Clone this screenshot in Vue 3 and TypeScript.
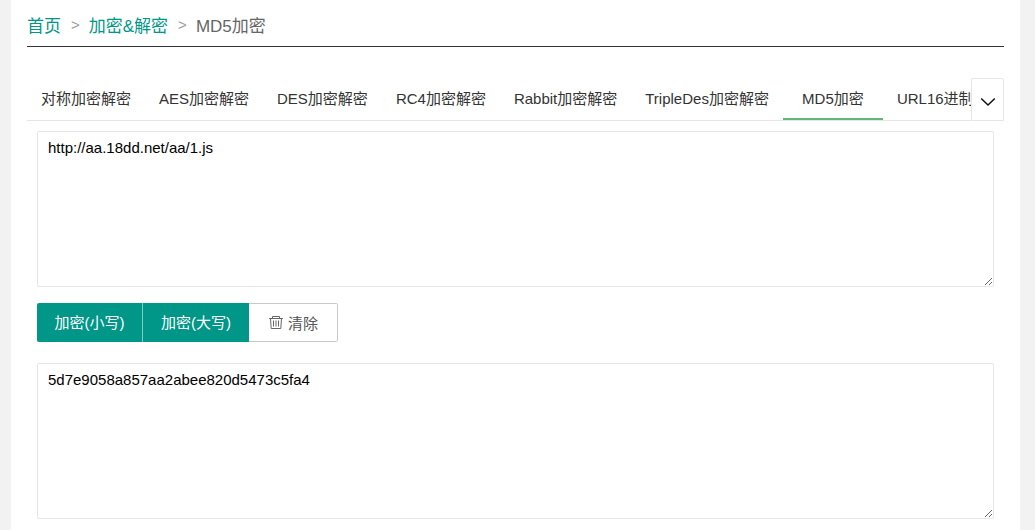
<script setup lang="ts">
import { ref } from 'vue'

const tabs: string[] = [
  '对称加密解密',
  'AES加密解密',
  'DES加密解密',
  'RC4加密解密',
  'Rabbit加密解密',
  'TripleDes加密解密',
  'MD5加密',
  'URL16进制',
]
const active = ref(6)
const source = ref('http://aa.18dd.net/aa/1.js')
const result = ref('5d7e9058a857aa2abee820d5473c5fa4')

function clearAll(): void {
  source.value = ''
  result.value = ''
}
</script>

<template>
  <div class="page">
    <main class="panel">
      <nav class="crumbs">
        <a href="#">首页</a>
        <span class="sep">&gt;</span>
        <a href="#">加密&amp;解密</a>
        <span class="sep">&gt;</span>
        <span class="current">MD5加密</span>
      </nav>

      <div class="tabbar">
        <div class="tabs" role="tablist">
          <button
            v-for="(tab, i) in tabs"
            :key="tab"
            type="button"
            role="tab"
            class="tab"
            :class="{ active: i === active }"
            :aria-selected="i === active"
            @click="active = i"
          >{{ tab }}</button>
        </div>
        <button type="button" class="more" aria-label="更多">
          <svg width="16" height="10" viewBox="0 0 16 10" fill="none" stroke="#111" stroke-width="1.5">
            <path d="M1.2 1.5L8 8L14.8 1.5" />
          </svg>
        </button>
      </div>

      <section class="content">
        <textarea v-model="source" class="box" aria-label="原文"></textarea>
        <div class="actions">
          <button type="button" class="btn primary">加密(小写)</button>
          <button type="button" class="btn primary">加密(大写)</button>
          <button type="button" class="btn plain" @click="clearAll">
            <svg width="14" height="14" viewBox="0 0 14 14" fill="none" stroke="#666" stroke-width="1">
              <path d="M0 3.5H14M3.5 3V1.5H10.5V3M1.5 3.5L2.2 13.5H11.8L12.5 3.5M4.5 5.5V11.5M7 5.5V11.5M9.5 5.5V11.5" />
            </svg>
            <span>清除</span>
          </button>
        </div>
        <textarea v-model="result" class="box" aria-label="结果"></textarea>
      </section>
    </main>
  </div>
</template>

<style>
body {
  margin: 0;
  background: #f2f2f2;
}
</style>

<style scoped>
.page {
  display: flex;
  min-height: 100vh;
  box-sizing: border-box;
  padding: 0 15px 0 11px;
  font-family: "Liberation Sans", "Noto Sans CJK SC", sans-serif;
  font-size: 15px;
  color: #333;
}
.page button,
.page textarea {
  font-family: inherit;
  font-size: inherit;
}
.panel {
  flex: 1;
  min-width: 0;
  padding: 0 16px;
  background: #fff;
}
.crumbs {
  display: flex;
  align-items: center;
  box-sizing: border-box;
  height: 47px;
  padding-top: 2px;
  border-bottom: 1px solid #333;
  font-size: 17px;
}
.crumbs a {
  color: #009688;
  text-decoration: none;
}
.sep {
  margin: 0 9px 0 10px;
  font-size: 15px;
  color: #999;
}
.current {
  color: #666;
}
.tabbar {
  display: flex;
  margin-top: 31px;
}
.tabs {
  display: flex;
  flex: 1;
  min-width: 0;
  overflow: hidden;
  box-sizing: border-box;
  height: 43px;
  border-bottom: 1px solid #e6e6e6;
}
.tab {
  flex: none;
  min-width: 100px;
  padding: 0 14px 2px;
  border: 0;
  border-bottom: 2px solid transparent;
  background: none;
  color: #333;
  white-space: nowrap;
}
.tab.active {
  border-bottom-color: #5fb878;
}
.more {
  display: flex;
  align-items: center;
  justify-content: center;
  width: 33px;
  padding: 4px 0 0;
  border: 1px solid #e6e6e6;
  border-radius: 2px 2px 0 0;
  background: #fff;
}
.content {
  padding: 10px;
}
.box {
  display: block;
  width: 100%;
  height: 156px;
  box-sizing: border-box;
  padding: 6px 10px;
  border: 1px solid #e6e6e6;
  border-radius: 2px;
  background: #fff;
  color: #000;
  line-height: 19px;
  resize: vertical;
  outline: 0;
}
.actions {
  display: flex;
  margin: 16px 0 21px;
}
.btn {
  display: flex;
  align-items: center;
  justify-content: center;
  gap: 5px;
  height: 39px;
  border: 0;
  white-space: nowrap;
}
.primary {
  width: 106px;
  padding: 0 0 2px;
  background: #009688;
  color: #fff;
}
.primary:first-child {
  width: 105px;
  border-radius: 2px 0 0 2px;
}
.primary + .primary {
  width: 107px;
  border-left: 1px solid #80cbc4;
}
.plain {
  width: 89px;
  padding: 0 0 1px 1px;
  border: 1px solid #c9c9c9;
  border-left: 0;
  border-radius: 0 2px 2px 0;
  background: #fff;
  color: #555;
}
</style>
